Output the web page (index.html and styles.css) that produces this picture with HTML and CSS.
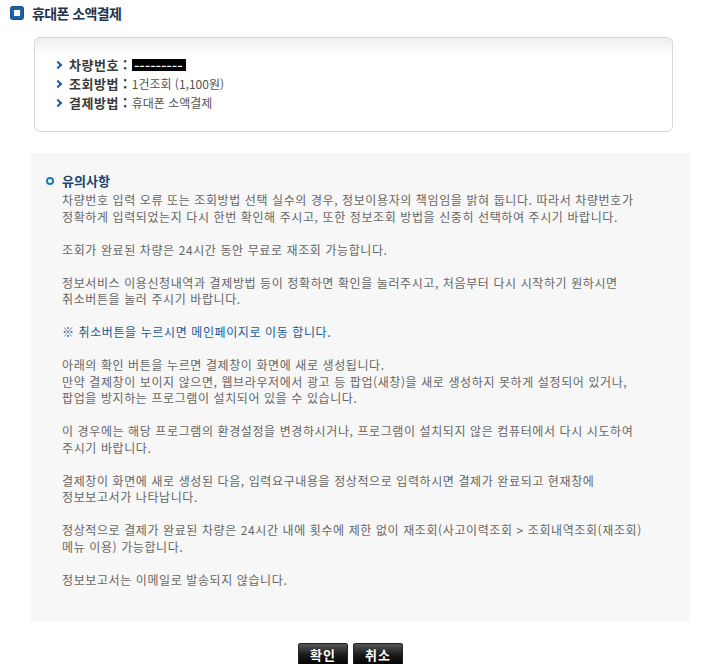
FILE: index.html
```html
<!DOCTYPE html>
<html lang="ko">
<head>
  <meta charset="UTF-8">
  <title>휴대폰 소액결제</title>
  <link rel="stylesheet" href="styles.css">
</head>
<body>
  <div class="page">
    <h2 class="title"><span class="title-icon"></span>휴대폰 소액결제</h2>

    <div class="summary">
      <ul>
        <li><span class="label">차량번호 :</span> <span class="masked">▬▬▬▬▬▬▬▬▬</span></li>
        <li><span class="label">조회방법 :</span> 1건조회 (1,100원)</li>
        <li><span class="label">결제방법 :</span> 휴대폰 소액결제</li>
      </ul>
    </div>

    <div class="notice">
      <h3><span class="dot"></span>유의사항</h3>
      <p>차량번호 입력 오류 또는 조회방법 선택 실수의 경우, 정보이용자의 책임임을 밝혀 둡니다. 따라서 차량번호가<br>정확하게 입력되었는지 다시 한번 확인해 주시고, 또한 정보조회 방법을 신중히 선택하여 주시기 바랍니다.</p>
      <p>조회가 완료된 차량은 24시간 동안 무료로 재조회 가능합니다.</p>
      <p>정보서비스 이용신청내역과 결제방법 등이 정확하면 확인을 눌러주시고, 처음부터 다시 시작하기 원하시면<br>취소버튼을 눌러 주시기 바랍니다.</p>
      <p class="blue">※ 취소버튼을 누르시면 메인페이지로 이동 합니다.</p>
      <p>아래의 확인 버튼을 누르면 결제창이 화면에 새로 생성됩니다.<br>만약 결제창이 보이지 않으면, 웹브라우저에서 광고 등 팝업(새창)을 새로 생성하지 못하게 설정되어 있거나,<br>팝업을 방지하는 프로그램이 설치되어 있을 수 있습니다.</p>
      <p>이 경우에는 해당 프로그램의 환경설정을 변경하시거나, 프로그램이 설치되지 않은 컴퓨터에서 다시 시도하여<br>주시기 바랍니다.</p>
      <p>결제창이 화면에 새로 생성된 다음, 입력요구내용을 정상적으로 입력하시면 결제가 완료되고 현재창에<br>정보보고서가 나타납니다.</p>
      <p>정상적으로 결제가 완료된 차량은 24시간 내에 횟수에 제한 없이 재조회(사고이력조회 &gt; 조회내역조회(재조회)<br>메뉴 이용) 가능합니다.</p>
      <p>정보보고서는 이메일로 발송되지 않습니다.</p>
    </div>

    <div class="buttons">
      <button class="btn">확인</button>
      <button class="btn">취소</button>
    </div>
  </div>
</body>
</html>
```

FILE: styles.css
```css
body {
  margin: 0;
  padding: 0;
  background-color: #fff;
  font-family: "Noto Sans CJK KR", "Noto Sans", sans-serif;
  color: #666;
}

.page {
  width: 704px;
}

.title {
  display: flex;
  align-items: center;
  margin: 0;
  padding: 4px 0 0 11px;
  height: 18px;
  font-size: 14px;
  font-weight: bold;
  letter-spacing: -0.6px;
  color: #1f3450;
}

.title-icon {
  width: 12px;
  height: 12px;
  margin-right: 9px;
  box-sizing: border-box;
  border: 3px solid #1e62a6;
  border-radius: 2px;
  background-color: #fff;
  box-shadow: 0 0 0 1px #17508c;
}

.summary {
  margin: 15px 0 0 34px;
  width: 639px;
  height: 95px;
  box-sizing: border-box;
  padding: 17px 0 0 18px;
  border: 1px solid #d8d8d8;
  border-radius: 6px;
  background: linear-gradient(#efefef, #fff 18px);
}

.summary ul {
  list-style: none;
  margin: 0;
  padding: 0;
}

.summary li {
  position: relative;
  display: flex;
  align-items: center;
  gap: 4px;
  height: 19px;
  padding-left: 16px;
  font-size: 12px;
  color: #555;
}

.summary li::before {
  content: "";
  position: absolute;
  left: 2px;
  top: 7px;
  width: 4px;
  height: 4px;
  border-top: 2px solid #1f5fa0;
  border-right: 2px solid #1f5fa0;
  transform: rotate(45deg);
}

.label {
  font-size: 13px;
  font-weight: bold;
  color: #3a3a3a;
  letter-spacing: 0.5px;
}

.masked {
  display: inline-block;
  padding: 0 3px;
  height: 12px;
  line-height: 12px;
  background-color: #000;
  color: #fff;
  font-size: 4px;
  letter-spacing: 1.4px;
}

.notice {
  margin: 21px 0 0 31px;
  width: 659px;
  box-sizing: border-box;
  padding: 19px 0 17px 31px;
  background-color: #f7f7f7;
}

.notice h3 {
  position: relative;
  margin: 0 0 2px 0;
  font-size: 13px;
  line-height: 18px;
  font-weight: bold;
  color: #1c4570;
}

.dot {
  position: absolute;
  left: -16px;
  top: 5px;
  width: 8px;
  height: 8px;
  box-sizing: border-box;
  border: 2px solid #1a7fa8;
  border-radius: 50%;
  background-color: #fff;
}

.notice p {
  margin: 0 0 16.5px 0;
  font-size: 12px;
  line-height: 16.5px;
  letter-spacing: 0.6px;
  white-space: nowrap;
  color: #666;
}

.notice p.blue {
  color: #1a5a96;
}

.buttons {
  display: flex;
  justify-content: center;
  gap: 5px;
  margin-top: 21px;
  padding-right: 3px;
}

.btn {
  height: 24px;
  padding: 0 11px;
  border: 1px solid #222;
  border-radius: 2px;
  background: linear-gradient(#555, #1a1a1a 50%, #000);
  color: #fff;
  font-family: "Noto Sans CJK KR", sans-serif;
  font-size: 13px;
  font-weight: bold;
  letter-spacing: 1px;
  cursor: pointer;
}
```
